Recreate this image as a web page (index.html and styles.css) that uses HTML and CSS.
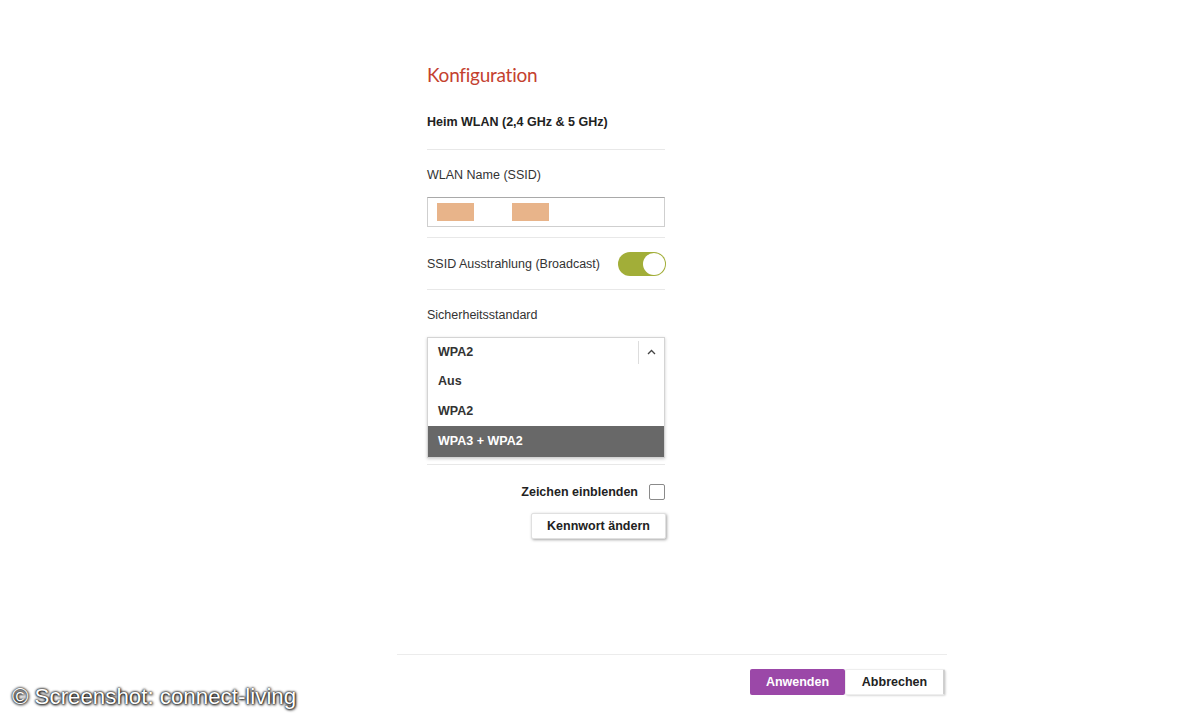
FILE: index.html
```html
<!DOCTYPE html>
<html lang="de">
<head>
<meta charset="utf-8">
<title>Konfiguration</title>
<link rel="stylesheet" href="styles.css">
</head>
<body>
<div class="page">
  <main class="form">
    <h1 class="title">Konfiguration</h1>
    <div class="section heading">Heim WLAN (2,4 GHz &amp; 5 GHz)</div>

    <div class="section field">
      <div class="label">WLAN Name (SSID)</div>
      <div class="input">
        <span class="mask"></span>
        <span class="mask"></span>
      </div>
    </div>

    <div class="section toggle-row">
      <span class="label">SSID Ausstrahlung (Broadcast)</span>
      <span class="toggle"><span class="knob"></span></span>
    </div>

    <div class="section field security">
      <div class="label">Sicherheitsstandard</div>
      <div class="select">
        <div class="select-head">
          <span class="select-value">WPA2</span>
          <span class="select-arrow">
            <svg width="9" height="6" viewBox="0 0 9 6"><path d="M1 5 L4.5 1.5 L8 5" fill="none" stroke="#444" stroke-width="1.3"/></svg>
          </span>
        </div>
        <div class="option">Aus</div>
        <div class="option">WPA2</div>
        <div class="option active">WPA3 + WPA2</div>
      </div>
    </div>

    <div class="show-row">
      <span>Zeichen einblenden</span>
      <span class="checkbox"></span>
    </div>
    <div class="btn-row">
      <button class="btn">Kennwort ändern</button>
    </div>
  </main>

  <footer class="footer">
    <button class="btn-primary">Anwenden</button>
    <button class="btn-secondary">Abbrechen</button>
  </footer>
</div>
<div class="watermark">© Screenshot: connect-living</div>
</body>
</html>
```

FILE: styles.css
```css
* { box-sizing: border-box; }
html, body { margin: 0; padding: 0; background: #fff; }
body {
  font-family: "Liberation Sans", Arial, sans-serif;
  font-size: 12.5px;
  color: #333;
  width: 1200px;
  height: 720px;
  overflow: hidden;
  position: relative;
}
.page {
  height: 720px;
  display: flex;
  flex-direction: column;
}
.form {
  width: 238px;
  margin-left: 427px;
  padding-top: 61px;
  display: flex;
  flex-direction: column;
}
.title {
  margin: 0;
  font-family: Lato, sans-serif;
  font-weight: 400;
  font-size: 19px;
  letter-spacing: -0.25px;
  line-height: 28px;
  color: #c4412f;
}
.section { border-bottom: 1px solid #e8e8e8; }
.heading {
  margin-top: 25px;
  font-weight: 700;
  line-height: 16px;
  padding-bottom: 19px;
  color: #222;
}
.label { line-height: 16px; color: #333; }
.field { padding-top: 17px; }
.field .label { margin-bottom: 14px; }
.input {
  height: 30px;
  border: 1px solid #cfcfcf;
  border-top-color: #a9a9a9;
  margin-bottom: 10px;
  display: flex;
  align-items: center;
  padding-left: 9px;
  gap: 38px;
}
.mask {
  width: 37px;
  height: 18px;
  background: #e8b48a;
}
.toggle-row {
  height: 52px;
  display: flex;
  align-items: center;
  justify-content: space-between;
}
.toggle {
  width: 48px;
  height: 24px;
  border-radius: 12px;
  background: #a2ae38;
  display: flex;
  align-items: center;
  justify-content: flex-end;
  padding-right: 1px;
  margin-right: -1px;
}
.knob {
  width: 22px;
  height: 22px;
  border-radius: 50%;
  background: #fff;
}
.security { padding-bottom: 6px; }
.select {
  border: 1px solid #d4d4d4;
  box-shadow: 0 1px 3px rgba(0,0,0,0.2);
  font-weight: 700;
  color: #333;
}
.select-head {
  height: 28px;
  display: flex;
  align-items: center;
}
.select-value { flex: 1; padding-left: 10px; }
.select-arrow {
  width: 26px;
  height: 23px;
  border-left: 1px solid #ddd;
  display: flex;
  align-items: center;
  justify-content: center;
}
.option {
  height: 30px;
  line-height: 30px;
  padding-left: 10px;
}
.option.active {
  background: #686868;
  color: #fff;
  height: 31px;
}
.show-row {
  margin-top: 18px;
  height: 18px;
  display: flex;
  justify-content: flex-end;
  align-items: center;
  gap: 11px;
  font-weight: 700;
  color: #222;
}
.checkbox {
  width: 16px;
  height: 16px;
  border: 1px solid #8a8a8a;
  border-radius: 2px;
}
.btn-row {
  margin-top: 12px;
  display: flex;
  justify-content: flex-end;
  margin-right: -1px;
}
.btn {
  width: 135px;
  height: 26px;
  background: #fff;
  border: 1px solid #e0e0e0;
  border-radius: 2px;
  box-shadow: 1px 1px 3px rgba(0,0,0,0.35);
  font-family: "Liberation Sans", Arial, sans-serif;
  font-size: 12.5px;
  font-weight: 700;
  color: #222;
  padding: 0;
}
.footer {
  margin-top: auto;
  margin-left: 397px;
  width: 550px;
  border-top: 1px solid #ececec;
  padding: 14px 2px 25px 0;
  display: flex;
  justify-content: flex-end;
}
.footer button {
  height: 26px;
  font-family: "Liberation Sans", Arial, sans-serif;
  font-size: 12.5px;
  font-weight: 700;
  padding: 0;
  border-radius: 2px;
}
.btn-primary {
  width: 95px;
  background: #9b48a8;
  color: #fff;
  border: none;
}
.btn-secondary {
  width: 100px;
  background: #fff;
  color: #222;
  border: 1px solid #eee;
  border-right: 2px solid #cfcfcf;
  box-shadow: 1px 1px 2px rgba(0,0,0,0.15);
}
.watermark {
  position: absolute;
  left: 12px;
  top: 683px;
  font-family: "Liberation Sans", Arial, sans-serif;
  font-size: 22.3px;
  line-height: 28px;
  color: #fff;
  text-shadow: 0 0 2px #000, 0 0 3px #000, 1px 1px 3px rgba(0,0,0,0.8);
}
```
